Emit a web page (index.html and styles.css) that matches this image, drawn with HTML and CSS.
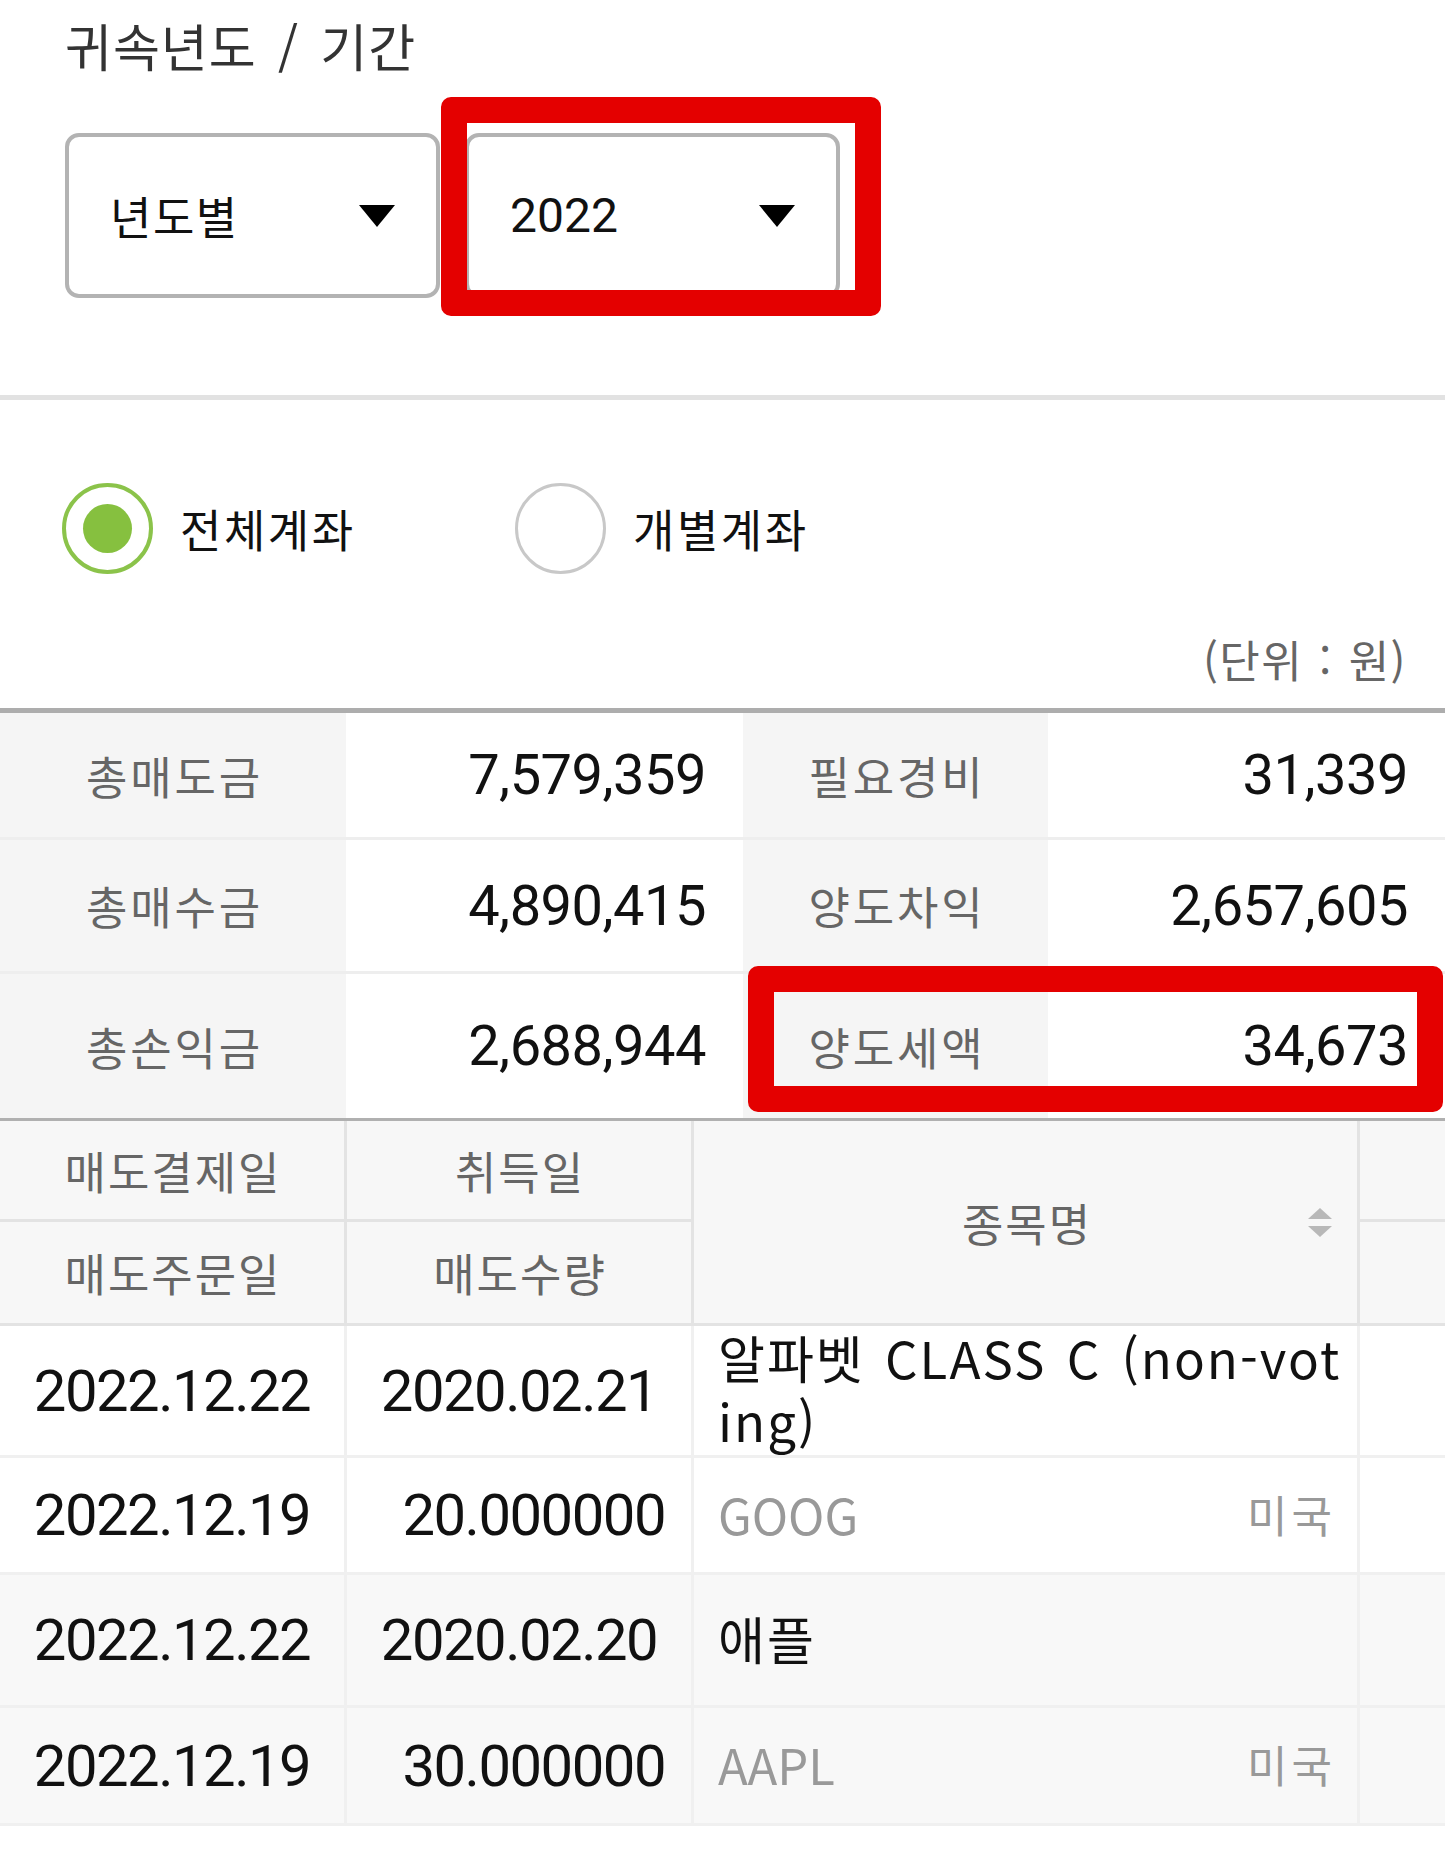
FILE: index.html
```html
<!DOCTYPE html>
<html lang="ko">
<head>
<meta charset="utf-8">
<title>양도소득세</title>
<link rel="stylesheet" href="styles.css">
</head>
<body>
<section class="period">
  <h2 class="period-title">귀속년도 / 기간</h2>
  <div class="selects">
    <div class="select"><span class="select-text">년도별</span><i class="caret"></i></div>
    <div class="select select-year"><span class="select-text num">2022</span><i class="caret"></i><div class="mark mark-year"></div></div>
  </div>
</section>
<div class="divider"></div>
<section class="accounts">
  <div class="radios">
    <div class="radio radio-on"><span class="ring"><span class="dot"></span></span><span class="radio-label">전체계좌</span></div>
    <div class="radio"><span class="ring"></span><span class="radio-label">개별계좌</span></div>
  </div>
  <p class="unit">(단위 : 원)</p>
</section>
<div class="summary">
  <div class="s-label">총매도금</div><div class="s-value num">7,579,359</div>
  <div class="s-label">필요경비</div><div class="s-value num">31,339</div>
  <div class="s-label">총매수금</div><div class="s-value num">4,890,415</div>
  <div class="s-label">양도차익</div><div class="s-value num">2,657,605</div>
  <div class="s-label">총손익금</div><div class="s-value num">2,688,944</div>
  <div class="s-label tax-label">양도세액</div><div class="s-value num tax-value">34,673</div>
  <div class="mark mark-tax"></div>
</div>
<div class="detail-head">
  <div class="h-cell">매도결제일</div>
  <div class="h-cell">취득일</div>
  <div class="h-cell h-name"><span class="h-name-text">종목명</span>
    <svg class="sort" width="24" height="29" viewBox="0 0 24 29"><path d="M0 11 L12 0 L24 11 Z" fill="#b8b8b8"/><path d="M0 18 L24 18 L12 29 Z" fill="#b8b8b8"/></svg>
  </div>
  <div class="h-cell"></div>
  <div class="h-cell">매도주문일</div>
  <div class="h-cell">매도수량</div>
  <div class="h-cell"></div>
</div>
<div class="detail-body">
  <div class="d-cell white num">2022.12.22</div>
  <div class="d-cell white num">2020.02.21</div>
  <div class="d-cell white d-name"><span class="name">알파벳 CLASS C (non-voting)</span></div>
  <div class="d-cell white"></div>

  <div class="d-cell white num">2022.12.19</div>
  <div class="d-cell white num qty">20.000000</div>
  <div class="d-cell white d-code"><span class="code">GOOG</span><span class="nation">미국</span></div>
  <div class="d-cell white"></div>

  <div class="d-cell gray num">2022.12.22</div>
  <div class="d-cell gray num">2020.02.20</div>
  <div class="d-cell gray d-name"><span class="name">애플</span></div>
  <div class="d-cell gray"></div>

  <div class="d-cell gray num">2022.12.19</div>
  <div class="d-cell gray num qty">30.000000</div>
  <div class="d-cell gray d-code"><span class="code">AAPL</span><span class="nation">미국</span></div>
  <div class="d-cell gray"></div>
</div>
</body>
</html>
```

FILE: styles.css
```css
* { box-sizing: border-box; }

html, body {
  margin: 0;
  padding: 0;
  background: #ffffff;
}

body {
  width: 1445px;
  font-family: "Noto Sans CJK KR", sans-serif;
  color: #111111;
}

.num {
  font-family: Roboto, "Noto Sans CJK KR", sans-serif;
}

/* ---------- period ---------- */
.period {
  height: 395px;
  padding: 0 0 0 65px;
}

.period-title {
  margin: 0;
  height: 90px;
  line-height: 90px;
  font-size: 51px;
  font-weight: 400;
  color: #333333;
  letter-spacing: 1px;
  word-spacing: 6px;
}

.selects {
  display: flex;
  gap: 25px;
  margin-top: 43px;
}

.select {
  position: relative;
  width: 375px;
  height: 165px;
  border: 4px solid #b3b3b3;
  border-radius: 14px;
  display: flex;
  align-items: center;
  justify-content: space-between;
  padding: 0 41px 0 41px;
  background: #ffffff;
}

.select-text {
  font-size: 45px;
  line-height: 60px;
  color: #111111;
  letter-spacing: 1.5px;
}

.select-text.num {
  font-size: 48px;
  letter-spacing: 0;
}

.caret {
  display: block;
  width: 0;
  height: 0;
  border-left: 18.5px solid transparent;
  border-right: 18.5px solid transparent;
  border-top: 22px solid #000000;
}

.mark {
  border: 26px solid #e40000;
  border-radius: 10px;
}

.mark-year {
  position: absolute;
  left: -28px;
  top: -40px;
  width: 440px;
  height: 219px;
}

.divider {
  height: 5px;
  background: #e2e2e2;
}

/* ---------- accounts ---------- */
.accounts {
  padding: 83px 38px 23px 0;
}

.radios {
  display: grid;
  grid-template-columns: 453px auto;
  padding-left: 62px;
}

.radio {
  display: flex;
  align-items: center;
  gap: 27px;
  height: 91px;
}

.ring {
  width: 91px;
  height: 91px;
  border-radius: 50%;
  border: 3px solid #c8c8c8;
  display: flex;
  align-items: center;
  justify-content: center;
  flex: none;
}

.radio-on .ring {
  border: 4px solid #8bc34a;
}

.dot {
  width: 49px;
  height: 49px;
  border-radius: 50%;
  background: #86c03f;
}

.radio-label {
  font-size: 45px;
  line-height: 60px;
  color: #111111;
  letter-spacing: 2.5px;
}

.unit {
  margin: 59px 0 0 0;
  text-align: right;
  font-size: 44px;
  line-height: 52px;
  color: #666666;
  letter-spacing: 1.5px;
  word-spacing: 2px;
}

/* ---------- summary ---------- */
.summary {
  display: grid;
  grid-template-columns: 346px 397px 305px 1fr;
  grid-template-rows: 124px 131px 144px;
  row-gap: 3px;
  background: #eeeeee;
  border-top: 5px solid #adadad;
}

.s-label {
  background: #f5f5f5;
  display: flex;
  align-items: center;
  justify-content: center;
  font-size: 45px;
  color: #666666;
  letter-spacing: 2.8px;
  padding-left: 3px;
}

.s-value {
  background: #ffffff;
  display: flex;
  align-items: center;
  justify-content: flex-end;
  padding-right: 37px;
  font-size: 56px;
  letter-spacing: -0.5px;
  color: #111111;
}

.tax-label {
  grid-row: 3;
  grid-column: 3;
}

.tax-value {
  grid-row: 3;
  grid-column: 4;
}

.mark-tax {
  grid-column: 3 / 5;
  grid-row: 3;
  margin: -8px 2px 6px 5px;
}

/* ---------- detail ---------- */
.detail-head,
.detail-body {
  display: grid;
  grid-template-columns: 344px 344px 663px 1fr;
  gap: 3px;
}

.detail-head {
  grid-template-rows: 98px 101px;
  background: #e3e3e3;
  border-top: 3px solid #b0b0b0;
  border-bottom: 3px solid #e3e3e3;
}

.h-cell {
  background: #f7f7f7;
  display: flex;
  align-items: center;
  justify-content: center;
  font-size: 45px;
  color: #666666;
  letter-spacing: 2px;
  padding-left: 2px;
}

.h-name {
  grid-column: 3;
  grid-row: 1 / 3;
  padding: 0 25px;
}

.h-name-text {
  flex: 1;
  text-align: center;
  margin-left: 27px;
}

.sort {
  flex: none;
  display: block;
}

.detail-body {
  grid-template-rows: 129px 114px 130px 115px;
  background: #f0f0f0;
  border-bottom: 3px solid #f0f0f0;
}

.d-cell {
  display: flex;
  align-items: center;
  justify-content: center;
  font-size: 58px;
  letter-spacing: -1.5px;
  color: #111111;
}

.d-cell.white { background: #ffffff; }
.d-cell.gray { background: #f8f8f8; }

.d-cell.qty {
  justify-content: flex-end;
  padding-right: 26px;
}

.d-name,
.d-code {
  justify-content: space-between;
  padding: 0 0 0 24px;
  letter-spacing: 0;
  font-family: "Noto Sans CJK KR", sans-serif;
}

.d-code {
  padding-right: 21px;
}

.name {
  font-size: 51px;
  line-height: 63px;
  color: #111111;
  word-break: break-all;
  letter-spacing: 2px;
  word-spacing: 4px;
  margin-top: -4px;
}

.code {
  font-size: 49px;
  color: #999999;
  margin-top: -4px;
}

.nation {
  font-size: 44px;
  color: #999999;
  letter-spacing: 4px;
  margin-top: -3px;
}
```
